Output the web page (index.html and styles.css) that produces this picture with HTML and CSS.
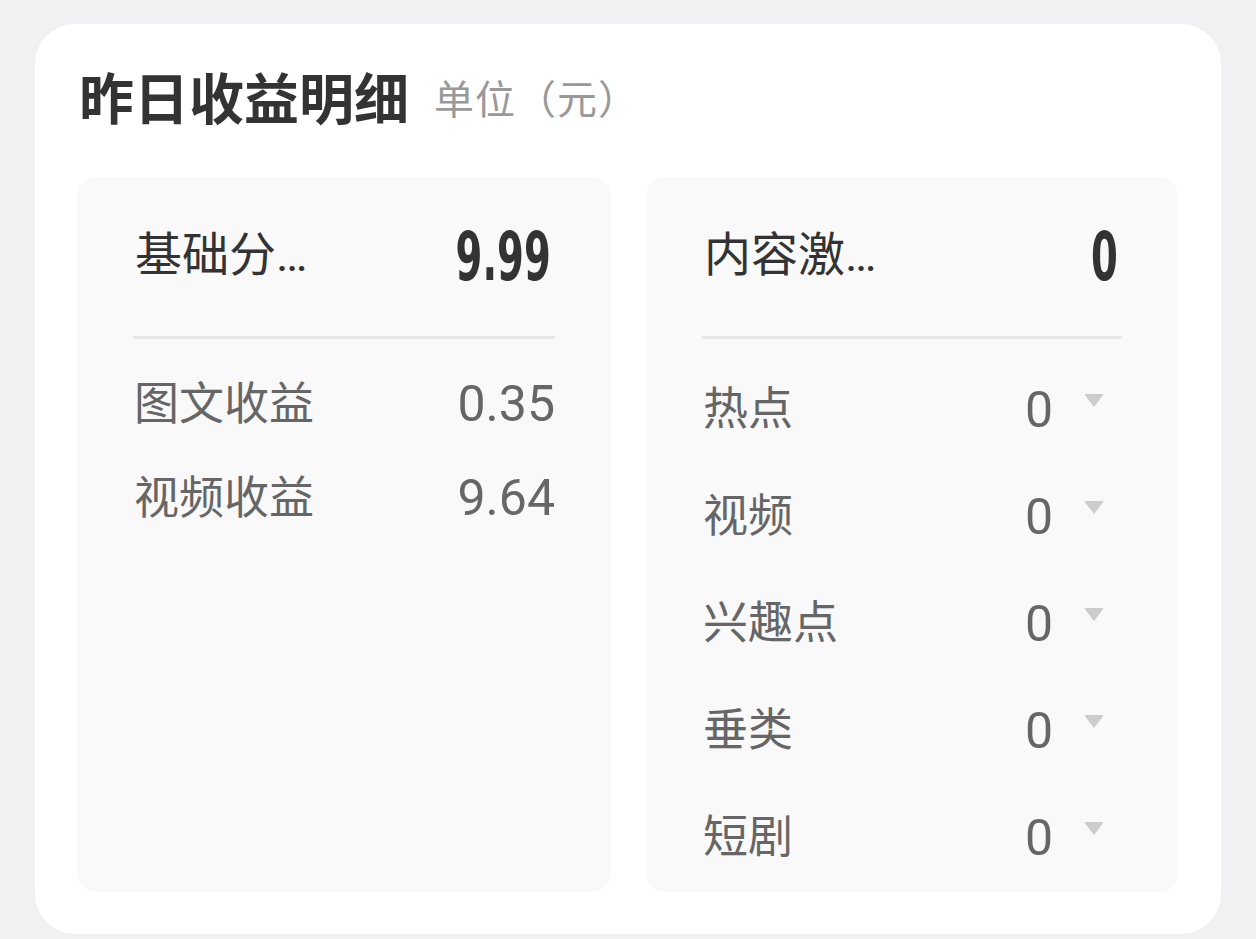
FILE: index.html
```html
<!DOCTYPE html>
<html lang="zh-CN">
<head>
<meta charset="utf-8">
<title>昨日收益明细</title>
<link rel="stylesheet" href="styles.css">
</head>
<body>
<div class="card">
  <div class="card-head">
    <h1 class="title">昨日收益明细</h1>
    <span class="unit">单位（元）</span>
  </div>
  <div class="panels">
    <section class="panel">
      <div class="panel-head">
        <span class="head-label">基础分…</span>
        <span class="big-num">9.99</span>
      </div>
      <ul class="rows rows-left">
        <li class="row"><span class="label">图文收益</span><span class="value">0.35</span></li>
        <li class="row"><span class="label">视频收益</span><span class="value">9.64</span></li>
      </ul>
    </section>
    <section class="panel">
      <div class="panel-head">
        <span class="head-label">内容激…</span>
        <span class="big-num">0</span>
      </div>
      <ul class="rows rows-right">
        <li class="row"><span class="label">热点</span><span class="value-wrap"><span class="value">0</span><span class="caret"></span></span></li>
        <li class="row"><span class="label">视频</span><span class="value-wrap"><span class="value">0</span><span class="caret"></span></span></li>
        <li class="row"><span class="label">兴趣点</span><span class="value-wrap"><span class="value">0</span><span class="caret"></span></span></li>
        <li class="row"><span class="label">垂类</span><span class="value-wrap"><span class="value">0</span><span class="caret"></span></span></li>
        <li class="row"><span class="label">短剧</span><span class="value-wrap"><span class="value">0</span><span class="caret"></span></span></li>
      </ul>
    </section>
  </div>
</div>
</body>
</html>
```

FILE: styles.css
```css
* { box-sizing: border-box; }

html, body {
  margin: 0;
  padding: 0;
  background: #f1f1f3;
}

body {
  font-family: "Roboto", "Noto Sans CJK SC", sans-serif;
  width: 1256px;
  height: 939px;
  overflow: hidden;
}

.card {
  margin: 24px 0 0 35px;
  width: 1186px;
  height: 910px;
  background: #ffffff;
  border-radius: 40px;
  padding: 0 43px 42px 42px;
  display: flex;
  flex-direction: column;
}

.card-head {
  height: 153px;
  display: flex;
  align-items: center;
  padding-left: 2px;
  padding-bottom: 11px;
}

.title {
  margin: 0;
  font-family: "Noto Sans CJK SC", sans-serif;
  font-size: 55px;
  line-height: 1;
  font-weight: 700;
  color: #333333;
}

.unit {
  margin-left: 25px;
  font-family: "Noto Sans CJK SC", sans-serif;
  font-size: 40px;
  line-height: 1;
  color: #999999;
  padding-top: 3px;
  text-spacing-trim: space-all;
  letter-spacing: 1px;
}

.panels {
  flex: 1;
  display: grid;
  grid-template-columns: 534px 532px;
  column-gap: 35px;
}

.panel {
  background: #f9f9f9;
  border-radius: 20px;
  padding: 0 56px;
}

.panel-head {
  height: 162px;
  border-bottom: 3px solid #e6e6e6;
  display: flex;
  align-items: center;
  justify-content: space-between;
  padding: 0 4px 0 2px;
}

.head-label {
  font-size: 47px;
  line-height: 1;
  color: #333333;
  padding-bottom: 4px;
}

.big-num {
  display: inline-block;
  font-family: "Liberation Sans Narrow", "DejaVu Sans Condensed", sans-serif;
  font-weight: 700;
  font-size: 67px;
  line-height: 1;
  color: #333333;
  transform: scaleX(0.64);
  transform-origin: right center;
  padding-top: 2px;
}

.rows {
  list-style: none;
  margin: 0;
  padding: 0;
}

.rows-left { padding-top: 18px; }
.rows-right { padding-top: 17px; }

.row {
  display: flex;
  align-items: center;
  justify-content: space-between;
  padding-left: 1px;
}

.rows-left .row { height: 94px; }
.rows-right .row { height: 107px; }

.label {
  font-size: 45px;
  line-height: 1;
  color: #666666;
}

.value {
  font-family: "Roboto", sans-serif;
  font-size: 50px;
  line-height: 1;
  color: #666666;
}

.value-wrap {
  display: flex;
  align-items: center;
  padding-right: 18px;
}

.rows-right .value {
  margin-right: -3px;
}

.caret {
  width: 0;
  height: 0;
  margin-left: 34px;
  border-left: 10px solid transparent;
  border-right: 10px solid transparent;
  border-top: 13px solid #cccccc;
  border-radius: 2px;
  align-self: flex-start;
  margin-top: 9px;
}
```
